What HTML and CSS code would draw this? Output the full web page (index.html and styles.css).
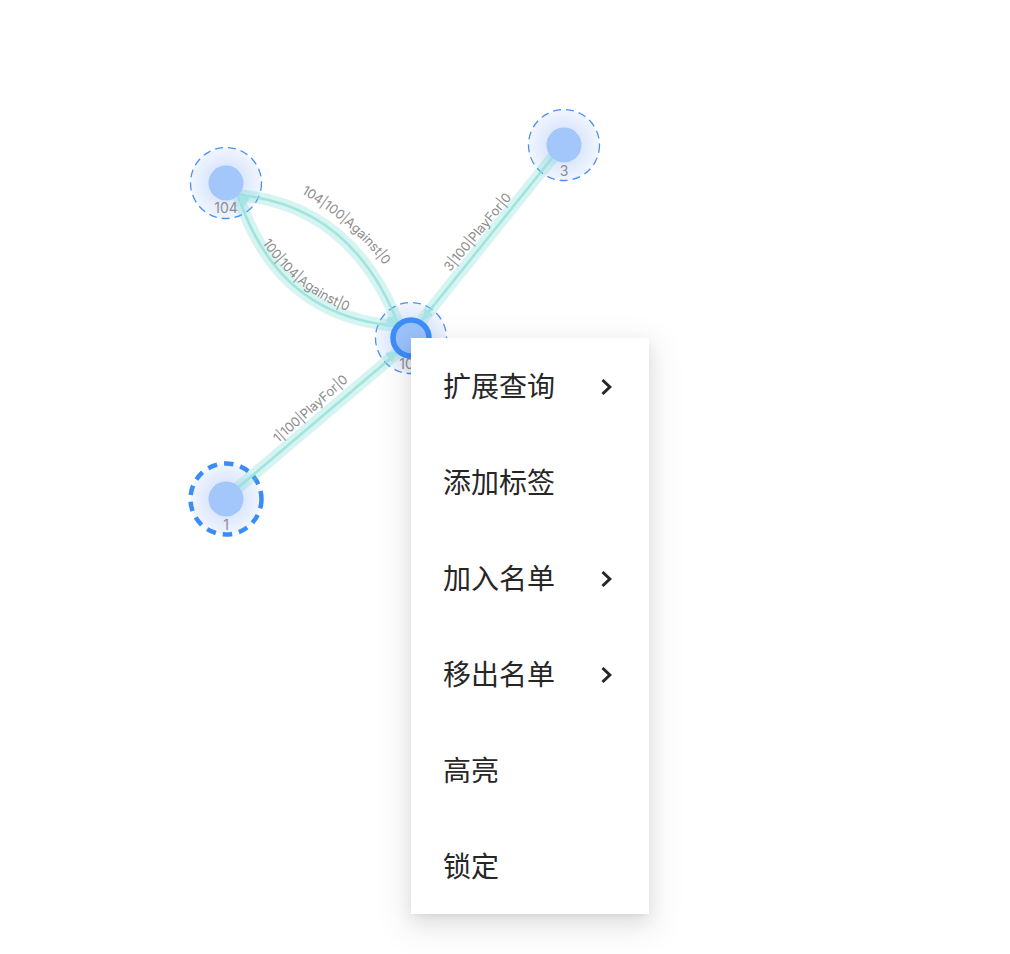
FILE: index.html
```html
<!DOCTYPE html>
<html lang="zh">
<head>
<meta charset="utf-8">
<title>Graph</title>
<link rel="stylesheet" href="styles.css">
</head>
<body>
<div class="stage">
<svg class="graph" width="1010" height="954" viewBox="0 0 1010 954">
  <defs>
    <radialGradient id="halo">
      <stop offset="0" stop-color="#cfdffc"/>
      <stop offset="0.55" stop-color="#dfe9fd"/>
      <stop offset="1" stop-color="#f1f6fe"/>
    </radialGradient>
    <path id="lp-a" d="M296 190 Q352 222 388 270"/>
    <path id="lp-b" d="M258 236 Q292 292 355 314"/>
    <path id="lp-c" d="M447 276 L515 194"/>
    <path id="lp-d" d="M274 447 L353 377"/>
  </defs>

  <g class="halos">
    <circle class="halo" cx="226" cy="183" r="35.5"/>
    <circle class="halo" cx="564" cy="145" r="35.5"/>
    <circle class="halo" cx="411" cy="338" r="35.5"/>
    <circle class="halo-bold" cx="226" cy="499" r="35.5"/>
  </g>

  <g class="edge-glow">
    <path d="M238 195 Q352 205 399 326"/>
    <path d="M238 195 Q278 318 399 326"/>
    <path d="M553 157 L422 320"/>
    <path d="M234 491 L398 352"/>
  </g>
  <g class="edge-line">
    <path d="M238 195 Q352 205 399 326"/>
    <path d="M238 195 Q278 318 399 326"/>
    <path d="M553 157 L422 320"/>
    <path d="M234 491 L398 352"/>
  </g>
  <g class="arrows">
    <polygon points="238,195 251,196 243,208"/>
    <polygon points="398,326 388,320 396,313"/>
    <polygon points="398,326 385,327 388,316"/>
    <polygon points="422,321 425,308 433,315"/>
    <polygon points="398,351 385,353 392,362"/>
  </g>

  <g class="cores">
    <circle class="core" cx="226" cy="183" r="17.5"/>
    <circle class="core" cx="564" cy="145" r="17.5"/>
    <circle class="core" cx="226" cy="499" r="17.5"/>
    <circle class="core-active" cx="411" cy="338" r="18"/>
  </g>

  <g class="node-labels">
    <text x="226" y="213">104</text>
    <text x="564" y="176">3</text>
    <text x="411" y="369">100</text>
    <text x="226" y="530">1</text>
  </g>

  <g class="edge-labels">
    <text><textPath href="#lp-a" startOffset="50%">104|100|Against|0</textPath></text>
    <text><textPath href="#lp-b" startOffset="50%">100|104|Against|0</textPath></text>
    <text><textPath href="#lp-c" startOffset="50%">3|100|PlayFor|0</textPath></text>
    <text><textPath href="#lp-d" startOffset="50%">1|100|PlayFor|0</textPath></text>
  </g>
</svg>

<ul class="menu">
  <li class="menu-item"><span>扩展查询</span><svg class="chev" width="14" height="20" viewBox="0 0 14 20"><path d="M2.5 3 L9.8 10 L2.5 17"/></svg></li>
  <li class="menu-item"><span>添加标签</span></li>
  <li class="menu-item"><span>加入名单</span><svg class="chev" width="14" height="20" viewBox="0 0 14 20"><path d="M2.5 3 L9.8 10 L2.5 17"/></svg></li>
  <li class="menu-item"><span>移出名单</span><svg class="chev" width="14" height="20" viewBox="0 0 14 20"><path d="M2.5 3 L9.8 10 L2.5 17"/></svg></li>
  <li class="menu-item"><span>高亮</span></li>
  <li class="menu-item"><span>锁定</span></li>
</ul>
</div>
</body>
</html>
```

FILE: styles.css
```css
html, body {
  margin: 0;
  padding: 0;
  background: #fff;
}
.stage {
  position: relative;
  width: 1010px;
  height: 954px;
  overflow: hidden;
}
.graph {
  display: block;
}
.halo {
  fill: url(#halo);
  stroke: #4a90f5;
  stroke-width: 1.3;
  stroke-dasharray: 8 5;
}
.halo-bold {
  fill: url(#halo);
  stroke: #3c8cf6;
  stroke-width: 4.5;
  stroke-dasharray: 9.5 7;
}
.edge-glow path {
  fill: none;
  stroke: #5fd6c8;
  stroke-opacity: 0.26;
  stroke-width: 12;
}
.edge-line path {
  fill: none;
  stroke: #8fdfd5;
  stroke-opacity: 0.75;
  stroke-width: 2.5;
}
.arrows polygon {
  fill: #a6e3e4;
}
.core {
  fill: #a3c6fb;
}
.core-active {
  fill: #9ac2fb;
  stroke: #3d8ef8;
  stroke-width: 5.5;
}
.node-labels text {
  font-family: Inter, "Noto Sans", sans-serif;
  font-size: 14px;
  fill: #8c8c8c;
  text-anchor: middle;
}
.edge-labels text {
  font-family: Inter, "Noto Sans", sans-serif;
  font-size: 13px;
  fill: #8c8c8c;
  text-anchor: middle;
}
.menu {
  position: absolute;
  left: 411px;
  top: 338px;
  width: 238px;
  margin: 0;
  padding: 0;
  list-style: none;
  background: #fff;
  box-shadow: 0 10px 30px 8px rgba(0, 0, 0, 0.07), 0 6px 16px 0 rgba(0, 0, 0, 0.08), 0 3px 6px -4px rgba(0, 0, 0, 0.12);
}
.menu-item {
  display: flex;
  align-items: center;
  justify-content: space-between;
  box-sizing: border-box;
  height: 96px;
  padding: 0 35px 2px 32px;
  font-family: "Noto Sans CJK SC", "Noto Sans", sans-serif;
  font-size: 28px;
  color: #262626;
}
.chev {
  position: relative;
  top: 2px;
}
.chev path {
  fill: none;
  stroke: #262626;
  stroke-width: 3;
}
```
